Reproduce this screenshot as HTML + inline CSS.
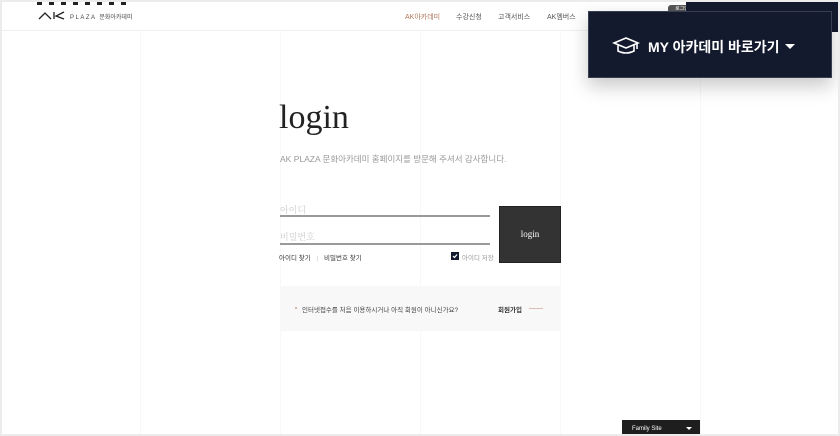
<!DOCTYPE html>
<html><head><meta charset="utf-8"><style>
*{margin:0;padding:0;box-sizing:border-box}
body{width:840px;height:436px;overflow:hidden;background:#ececec;font-family:"Liberation Sans","Noto Sans CJK KR",sans-serif;position:relative}
.page{position:absolute;left:2px;top:2px;width:836px;height:432px;background:#fff;overflow:hidden}
.vl{position:absolute;top:0;bottom:0;width:1px;background:#f8f8f8}
.a{position:absolute;white-space:nowrap}
</style></head><body>
<div class="page">
<div class="vl" style="left:138px"></div><div class="vl" style="left:278px"></div><div class="vl" style="left:418px"></div><div class="vl" style="left:558px"></div><div class="vl" style="left:698px"></div>
<div class="a" style="left:0;top:0;width:836px;height:29px;background:#fff;border-bottom:1px solid #f0f0f0"></div>
<div class="a" style="left:35px;top:0;width:92px;height:3px;background:repeating-linear-gradient(90deg,#222 0 5px,transparent 5px 12px)"></div>
<svg class="a" style="left:36px;top:9px" width="28" height="9" viewBox="0 0 28 9"><path d="M1 8 L7 2 L13 8 M16 1 V8 M26 1 L18 5 L26 8" fill="none" stroke="#222" stroke-width="1.3"/></svg>
<div class="a" style="left:68px;top:10px;font-size:6px;letter-spacing:1.5px;color:#444">PLAZA <span style="letter-spacing:0">문화아카데미</span></div>
<div class="a" style="left:403px;top:10px;font-size:7px;color:#b0775a">AK아카데미</div>
<div class="a" style="left:454px;top:10px;font-size:7px;color:#555">수강신청</div>
<div class="a" style="left:496px;top:10px;font-size:7px;color:#555">고객서비스</div>
<div class="a" style="left:545px;top:10px;font-size:7px;color:#555">AK멤버스</div>
<div class="a" style="left:666px;top:3px;width:28px;height:8px;border-radius:3px;background:#555;color:#fff;font-size:5px;text-align:center;line-height:8px">로그인</div>
<div class="a" style="left:684px;top:0;width:152px;height:30px;background:#141a2e"></div>
<div class="a" style="left:586px;top:9px;width:244px;height:67px;background:#141a2e;border:1px solid #3a3f50;box-shadow:0 8px 18px rgba(0,0,0,.22)"></div>
<svg class="a" style="left:610px;top:35px" width="28" height="18" viewBox="0 0 28 18"><path d="M2 6 L14 1 L26 6 L14 11 Z M6 8 V14 Q14 18 22 14 V8 M25 6 V12" fill="none" stroke="#fff" stroke-width="1.6"/></svg>
<div class="a" style="left:646px;top:35px;font-size:14px;font-weight:bold;color:#fff">MY 아카데미 바로가기</div>
<div class="a" style="left:783px;top:42px;width:0;height:0;border-left:5px solid transparent;border-right:5px solid transparent;border-top:5px solid #fff"></div>
<div class="a" style="left:277px;top:97px;font-family:'Liberation Serif',serif;font-size:34px;color:#222">login</div>
<div class="a" style="left:278px;top:151px;font-size:8.5px;color:#999">AK PLAZA 문화아카데미 홈페이지를 방문해 주셔서 감사합니다.</div>
<div class="a" style="left:278px;top:201px;font-size:9px;color:#ccc;font-family:'Liberation Serif','Noto Serif CJK SC',serif">아이디</div>
<div class="a" style="left:278px;top:213px;width:210px;height:2px;background:#999"></div>
<div class="a" style="left:278px;top:228px;font-size:9px;color:#ccc;font-family:'Liberation Serif','Noto Serif CJK SC',serif">비밀번호</div>
<div class="a" style="left:278px;top:241px;width:210px;height:2px;background:#999"></div>
<div class="a" style="left:277px;top:250px;font-size:6.5px;color:#333">아이디 찾기 <span style="color:#ccc;margin:0 4px">|</span> 비밀번호 찾기</div>
<div class="a" style="left:449px;top:250px;width:8px;height:8px;background:#141a2e"></div>
<svg class="a" style="left:450px;top:251px" width="6" height="6"><path d="M1 3 L2.5 4.5 L5 1.5" stroke="#fff" fill="none" stroke-width="1.2"/></svg>
<div class="a" style="left:460px;top:250px;font-size:6.5px;color:#999">아이디 저장</div>
<div class="a" style="left:497px;top:204px;width:62px;height:57px;background:#333;border:1px solid #222;color:#fff;font-family:'Liberation Serif',serif;font-size:9px;text-align:center;line-height:55px">login</div>
<div class="a" style="left:278px;top:284px;width:280px;height:45px;background:#f8f8f8"></div>
<div class="a" style="left:293px;top:305px;width:2px;height:2px;background:#c9a48f;border-radius:1px"></div>
<div class="a" style="left:300px;top:302px;font-size:6.5px;color:#444">인터넷접수를 처음 이용하시거나 아직 회원이 아니신가요?</div>
<div class="a" style="left:496px;top:302px;font-size:6.5px;font-weight:bold;color:#333">회원가입</div>
<div class="a" style="left:527px;top:306px;width:14px;height:1px;background:#d9bfae"></div>
<div class="a" style="left:620px;top:418px;width:78px;height:16px;background:#1e1e1e;color:#fff;font-size:6px;padding:6px 0 0 10px">Family Site</div>
<div class="a" style="left:684px;top:425px;border-left:3px solid transparent;border-right:3px solid transparent;border-top:3px solid #fff"></div>
</div>
</body></html>
